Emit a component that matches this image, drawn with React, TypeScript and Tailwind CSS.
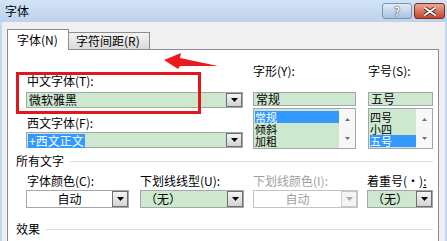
const Tri = ({ disabled, up, small }: { disabled?: boolean; up?: boolean; small?: boolean }) => (
  <svg width={small ? 5 : 7} height={small ? 3 : 4} viewBox="0 0 7 4">
    <path d={up ? "M0 4h7L3.5 0z" : "M0 0h7L3.5 4z"} fill={disabled ? "#a8a8a8" : small ? "#707070" : "#000"} />
  </svg>
);

function Combo({
  className,
  fieldClass,
  text,
  disabled,
}: {
  className: string;
  fieldClass: string;
  text: string;
  disabled?: boolean;
}) {
  return (
    <div className={`flex border ${disabled ? "border-[#c3c3c3]" : "border-[#a2a6ad]"} ${className}`}>
      <div className={`flex-1 flex items-center text-[12px] leading-none ${fieldClass}`}>{text}</div>
      <div
        className={`w-[16px] flex items-center justify-center border ${
          disabled ? "border-[#c9c9c9] bg-[#f4f4f4]" : "border-[#6f6f6f] bg-linear-to-b from-[#f4f4f4] to-[#d3d3d3]"
        }`}
      >
        <Tri disabled={disabled} />
      </div>
    </div>
  );
}

function ListBox({ items, sel, className }: { items: string[]; sel: number; className: string }) {
  return (
    <div className={`flex border border-[#a2a6ad] bg-[#cde8cf] ${className}`}>
      <div className="flex-1 flex flex-col pt-[2px] pl-[1px]">
        {items.map((it, i) => (
          <div
            key={it}
            className={
              i === sel
                ? "h-[12px] flex items-center text-[11px] leading-none bg-[#3399ff] text-white"
                : "h-[12px] flex items-center text-[11px] leading-none"
            }
          >
            {it}
          </div>
        ))}
      </div>
      <div className="w-[16px] flex flex-col justify-between items-center pt-[9px] pb-[8px] bg-[#f7f7f7]">
        <Tri up small />
        <Tri small />
      </div>
    </div>
  );
}

function Section({ title }: { title: string }) {
  return (
    <div className="flex items-center h-[12px] ml-[8px] mr-[5px]">
      <span className="text-[12px] leading-[12px]">{title}</span>
      <div className="flex-1 h-px bg-[#d5dfe5] ml-[6px]" />
    </div>
  );
}

export default function App() {
  return (
    <div className="relative w-[447px] h-[241px] overflow-hidden bg-[#f0f0f0] text-black font-['Noto_Sans_CJK_SC',sans-serif]">
      {/* title bar */}
      <div className="h-[22px] flex items-center justify-between pl-[5px] pr-[2px] bg-linear-to-b from-[#d3e3f5] to-[#bcd3ec]">
        <span className="text-[12px] leading-none">字体</span>
        <div className="flex gap-[2px]">
          <div className="w-[30px] h-[16px] rounded-[3px] border border-[#7d93ad] bg-linear-to-b from-[#e2ecf8] to-[#a9c1de] flex items-center justify-center text-[12px] leading-none font-bold text-white [text-shadow:0_0_1px_#223,0_0_1px_#223]">
            ?
          </div>
          <div className="w-[31px] h-[16px] rounded-[3px] border border-[#7a2e22] bg-linear-to-b from-[#e9a795] to-[#c4432c] flex items-center justify-center">
            <svg width="12" height="9" viewBox="0 0 12 9">
              <path d="M1 1l10 7M11 1L1 8" stroke="#3a1410" strokeWidth="3.4" strokeLinecap="round" />
              <path d="M1 1l10 7M11 1L1 8" stroke="#fff" strokeWidth="2" strokeLinecap="round" />
            </svg>
          </div>
        </div>
      </div>

      <div className="flex h-[219px]">
        <div className="w-[2px] bg-[#c3d7ef]" />
        <div className="flex-1 flex flex-col pl-[5px] pt-[7px]">
          {/* tabs */}
          <div className="flex items-end h-[20px] relative z-10">
            <div className="w-[62px] h-[21px] -mb-px border border-b-0 border-[#898c95] bg-white flex items-center pl-[9px] text-[12px] leading-none">
              字体(N)
            </div>
            <div className="w-[81px] h-[17px] border border-l-0 border-b-0 border-[#898c95] bg-linear-to-b from-[#f3f3f3] to-[#dadada] flex items-center pl-[7px] text-[12px] leading-none">
              字符间距(R)
            </div>
          </div>
          {/* panel */}
          <div className="w-[432px] flex-1 border border-b-0 border-[#898c95] bg-white">
            <div className="flex pl-[18px]">
              <div className="w-[217px] flex flex-col pt-[25px]">
                <div className="h-[12px] text-[12px] leading-[12px] pl-[1px]">中文字体(T):</div>
                <Combo className="mt-[5px] h-[16px]" fieldClass="bg-[#cde8cf] pl-[2px]" text="微软雅黑" />
                <div className="mt-[9px] h-[12px] text-[12px] leading-[12px] pl-[1px]">西文字体(F):</div>
                <Combo className="mt-[3px] h-[16px]" fieldClass="bg-[#cde8cf]" text="" />
              </div>
              <div className="w-[103px] ml-[10px] flex flex-col pt-[15px]">
                <div className="h-[12px] text-[12px] leading-[12px]">字形(Y):</div>
                <div className="mt-[15px] h-[14px] border border-[#a2a6ad] bg-[#cde8cf] text-[12px] leading-[12px] pl-[2px]">
                  常规
                </div>
                <ListBox className="mt-[2px] h-[41px]" items={["常规", "倾斜", "加粗"]} sel={0} />
              </div>
              <div className="w-[65px] ml-[12px] flex flex-col pt-[15px]">
                <div className="h-[12px] text-[12px] leading-[12px]">字号(S):</div>
                <div className="mt-[15px] h-[14px] border border-[#a2a6ad] bg-[#cde8cf] text-[12px] leading-[12px] pl-[2px]">
                  五号
                </div>
                <ListBox className="mt-[2px] h-[41px]" items={["四号", "小四", "五号"]} sel={2} />
              </div>
            </div>

            <div className="mt-[6px]">
              <Section title="所有文字" />
            </div>
            <div className="flex pl-[18px] mt-[8px]">
              <div className="w-[103px] flex flex-col">
                <div className="h-[12px] text-[12px] leading-[12px] pl-[1px]">字体颜色(C):</div>
                <Combo className="mt-[3px] h-[18px]" fieldClass="bg-white justify-center" text="自动" />
              </div>
              <div className="w-[104px] ml-[11px] flex flex-col">
                <div className="h-[12px] text-[12px] leading-[12px]">下划线线型(U):</div>
                <Combo className="mt-[3px] h-[18px]" fieldClass="bg-[#cde8cf] pl-[4px]" text="（无）" />
              </div>
              <div className="w-[105px] ml-[9px] flex flex-col">
                <div className="h-[12px] text-[12px] leading-[12px] text-[#a0a0a0]">下划线颜色(I):</div>
                <Combo className="mt-[3px] h-[18px]" fieldClass="bg-white justify-center text-[#a0a0a0]" text="自动" disabled />
              </div>
              <div className="w-[66px] ml-[9px] flex flex-col">
                <div className="h-[12px] text-[12px] leading-[12px] whitespace-nowrap">
                  着重号(·)<span className="underline">:</span>
                </div>
                <Combo className="mt-[3px] h-[18px]" fieldClass="bg-[#cde8cf] pl-[4px]" text="（无）" />
              </div>
            </div>
            <div className="mt-[15px]">
              <Section title="效果" />
            </div>
          </div>
        </div>
        <div className="w-[2px] bg-[#c3d7ef]" />
      </div>

      {/* 西文字体 selected text */}
      <div className="absolute left-[28px] top-[134px] h-[14px] px-[1px] bg-[#3399ff] text-white text-[12px] leading-[14px]">
        +西文正文
      </div>

      {/* red annotation box */}
      <div className="absolute left-[16px] top-[72px] w-[185px] h-[42px] border-[3px] border-[#e3161c]" />

      {/* red arrow */}
      <svg className="absolute left-0 top-0" width="447" height="241" viewBox="0 0 447 241">
        <polygon points="164,60 181,53 180,58 218,66 180,66 178,69" fill="#ea1b1e" />
      </svg>
    </div>
  );
}
